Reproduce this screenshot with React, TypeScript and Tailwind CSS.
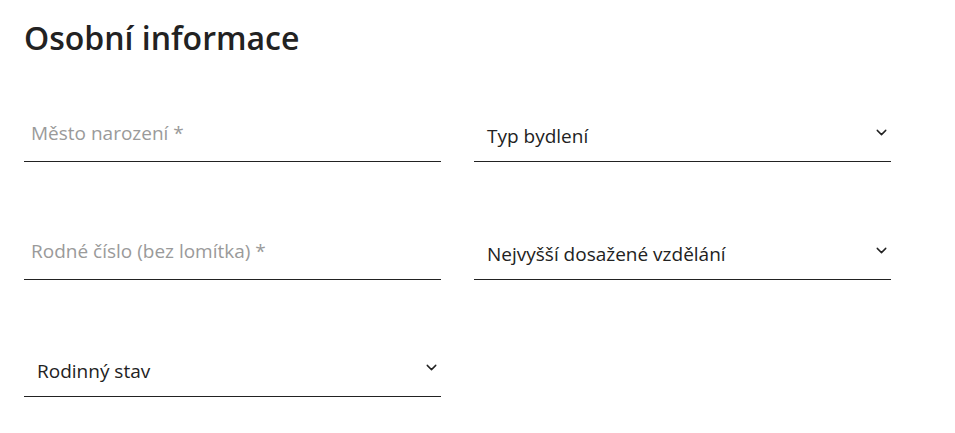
import { ChevronDown } from "lucide-react";

type FieldProps = {
  label: string;
};

const TextField = ({ label }: FieldProps) => (
  <div className="flex h-[58px] items-end border-b border-[#222222] pb-[16px] pl-[7px]">
    <input
      placeholder={label}
      className="w-full bg-transparent text-[19px] leading-[24px] text-[#222222] outline-none placeholder:text-[#9a9a9a]"
    />
  </div>
);

const SelectField = ({ label }: FieldProps) => (
  <div className="relative flex h-[58px] items-end border-b border-[#222222] pb-[13px] pl-[13px]">
    <span className="text-[19px] leading-[24px] text-[#222222]">{label}</span>
    <ChevronDown
      className="absolute right-[1px] top-[20px] h-[17px] w-[17px] text-[#222222]"
      strokeWidth={2}
    />
  </div>
);

export default function App() {
  return (
    <div
      className="min-h-[433px] bg-white px-6 pt-5"
      style={{ fontFamily: '"Open Sans", "Noto Sans", sans-serif' }}
    >
      <h1 className="text-[32px] font-semibold leading-9 text-[#222222]">Osobní informace</h1>
      <div className="mt-[48px] grid w-[867px] grid-cols-2 gap-x-[33px] gap-y-[59.5px]">
        <TextField label="Město narození *" />
        <SelectField label="Typ bydlení" />
        <TextField label="Rodné číslo (bez lomítka) *" />
        <SelectField label="Nejvyšší dosažené vzdělání" />
        <SelectField label="Rodinný stav" />
      </div>
    </div>
  );
}
